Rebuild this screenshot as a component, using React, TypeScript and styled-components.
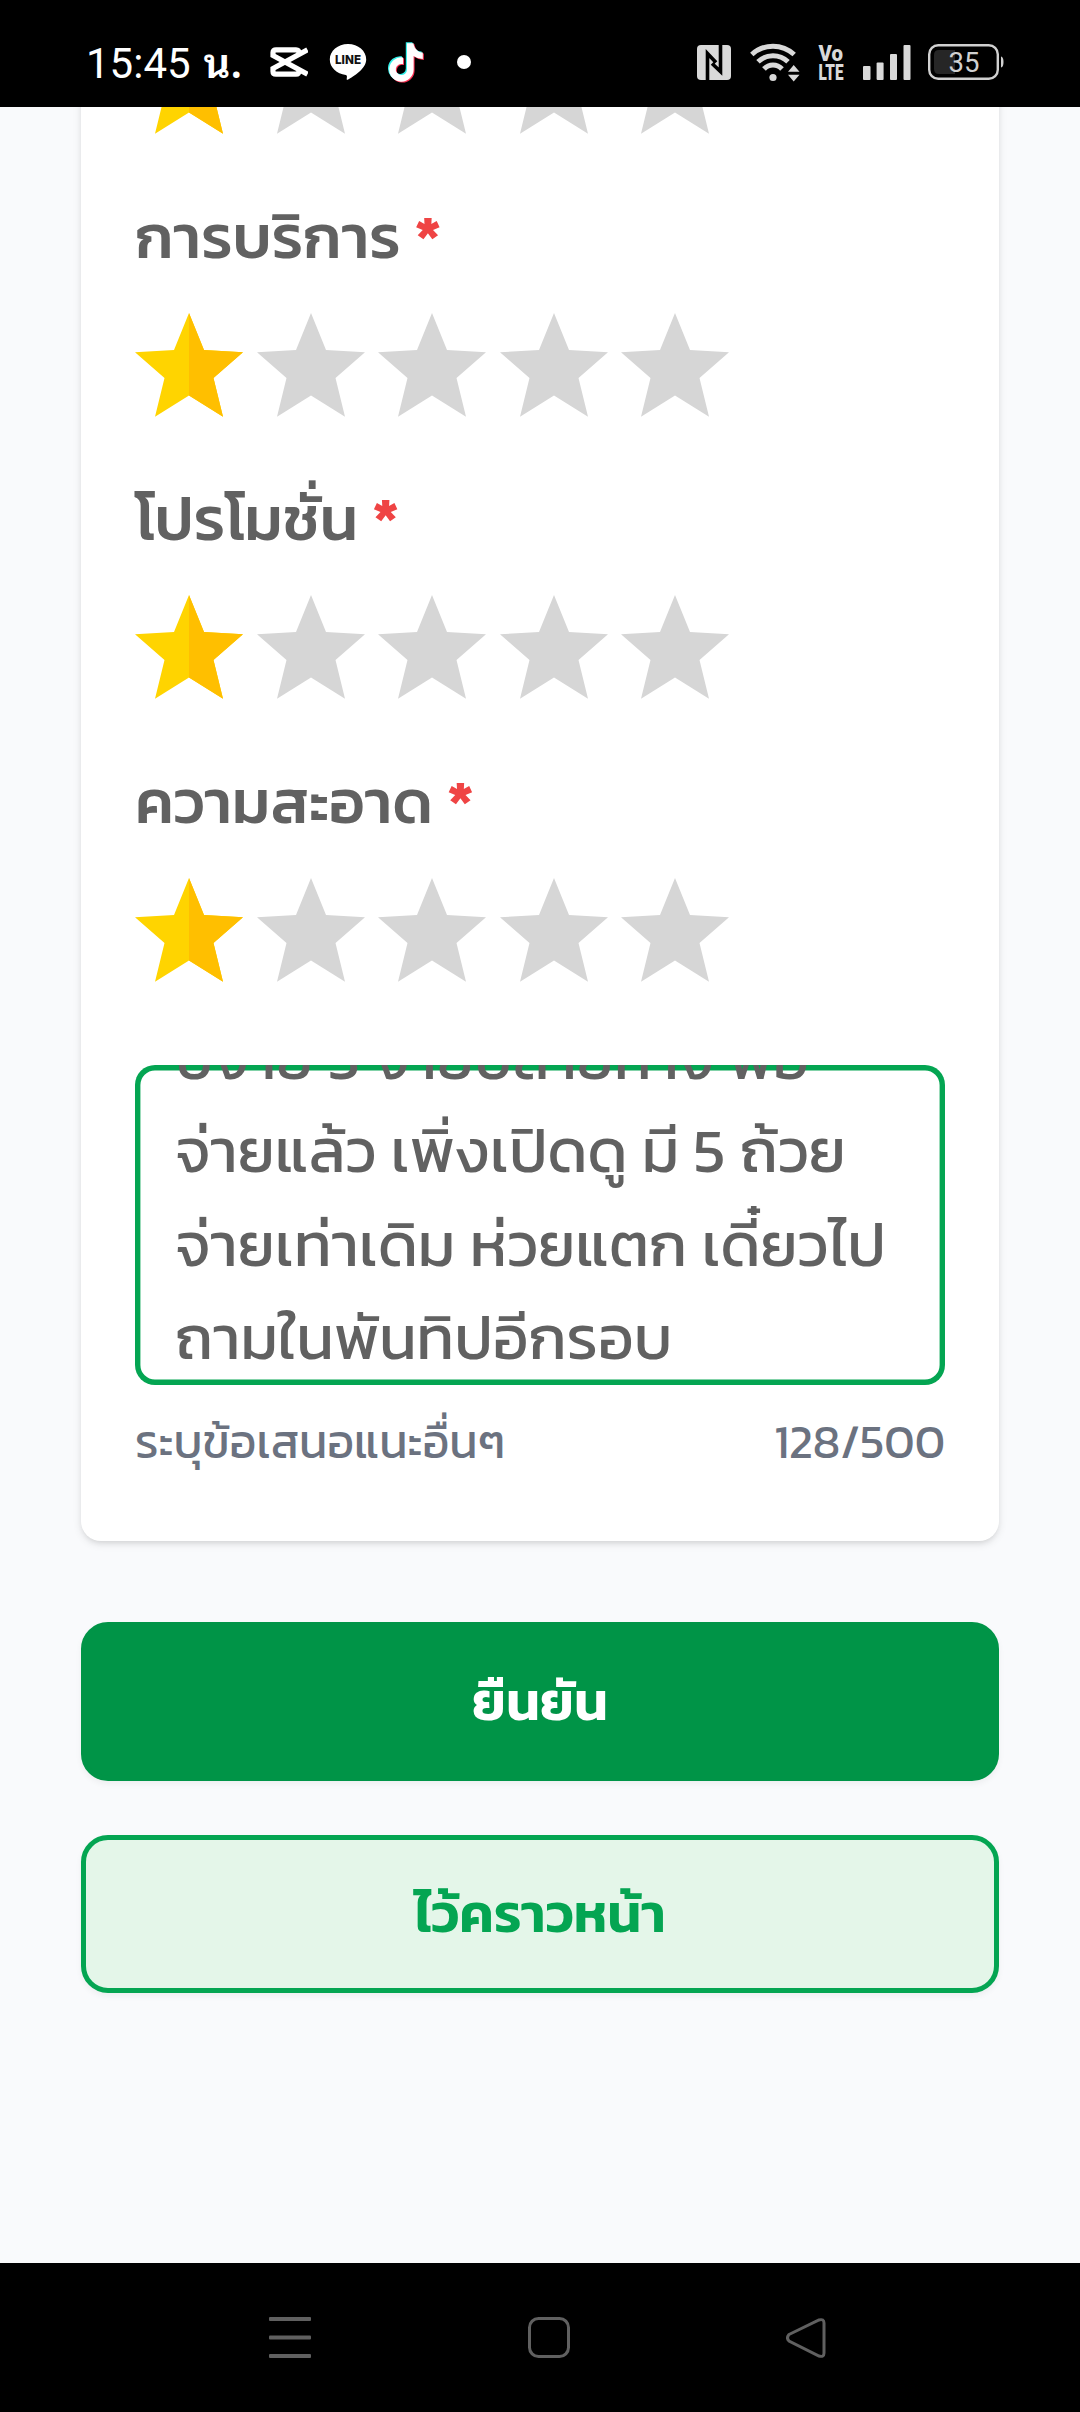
import React from "react";
import styled, { createGlobalStyle } from "styled-components";

const thai = `"Kanit", "Prompt", "Noto Sans Thai", "Noto Sans", "Liberation Sans", sans-serif`;
const loopedThai = `"Noto Sans Thai Looped", "Sarabun", "Noto Sans Thai", "Loma", "Garuda", "Noto Serif Thai", ${thai}`;

const GlobalStyle = createGlobalStyle`
  * { box-sizing: border-box; }
  html, body { margin: 0; padding: 0; background: #f9fafc; }
  body { font-family: ${thai}; }
  svg { display: block; flex: none; }
`;

const Screen = styled.div`
  width: 1080px;
  height: 2412px;
  display: flex;
  flex-direction: column;
  overflow: hidden;
  background: #f9fafc;
`;

const StatusBar = styled.header`
  flex: none;
  height: 107px;
  padding: 17px 76px 0 86px;
  display: flex;
  align-items: center;
  justify-content: space-between;
  background: #000;
`;

const StatusGroup = styled.div`
  display: flex;
  align-items: center;
`;

const Clock = styled.div`
  display: flex;
  align-items: baseline;
  gap: 13px;
  width: 184px;
  height: 40px;
  line-height: 40px;
  margin-top: -6px;
  font-family: Roboto, ${loopedThai};
  font-size: 42px;
  color: #fff;
  white-space: nowrap;
`;

const ClockUnit = styled.span`
  font-family: ${loopedThai};
  font-weight: 600;
  font-size: 42px;
`;

const Gap = styled.span<{ $w: number }>`
  flex: none;
  width: ${(p) => p.$w}px;
`;

const Main = styled.main`
  flex: none;
  height: 2156px;
  padding: 0 81px;
  overflow: hidden;
`;

const Card = styled.section`
  margin-top: -255px;
  height: 1689px;
  padding: 0 54px;
  background: #fff;
  border-radius: 20px;
  box-shadow: 0 3px 9px rgba(0, 0, 0, 0.1), 0 3px 6px -3px rgba(0, 0, 0, 0.12);
`;

const Rating = styled.div`
  height: 282.4px;
  display: flex;
  flex-direction: column;
  justify-content: flex-end;
`;

const Label = styled.h3`
  margin: 0 0 36px;
  height: 80px;
  font-size: 62.1px;
  line-height: 80px;
  font-weight: 500;
  color: #616161;
  white-space: nowrap;
`;

const Required = styled.span`
  color: #ef4444;
  font-weight: 600;
`;

const Stars = styled.div`
  display: flex;
  gap: 13.5px;
`;

const CommentBox = styled.div`
  margin-top: 83px;
  height: 320px;
  padding: 0 40px;
  display: flex;
  flex-direction: column;
  justify-content: flex-end;
  overflow: hidden;
  border-radius: 20px;
  box-shadow: inset 0 0 0 5.4px #04a552;
  color: #616161;
`;

const CommentLine = styled.div`
  flex: none;
  height: 93.5px;
  line-height: 94px;
  font-size: 62.15px;
  white-space: nowrap;
`;

const HelperRow = styled.div`
  margin-top: 25px;
  display: flex;
  justify-content: space-between;
  line-height: 64px;
  font-size: 46.6px;
  color: #6b7280;
  white-space: nowrap;
`;

const Button = styled.button<{ $primary?: boolean }>`
  display: flex;
  align-items: center;
  justify-content: center;
  width: 100%;
  height: ${(p) => (p.$primary ? 159 : 158)}px;
  margin: ${(p) => (p.$primary ? 81 : 54)}px 0 0;
  padding: 0 0 ${(p) => (p.$primary ? 1 : 2)}px;
  border: 5px solid ${(p) => (p.$primary ? "#009447" : "#04a552")};
  border-radius: 27px;
  background: ${(p) => (p.$primary ? "#009447" : "#e4f6e9")};
  color: ${(p) => (p.$primary ? "#fff" : "#04a552")};
  box-shadow: 0 3px 6px rgba(0, 0, 0, 0.05);
  font-family: ${thai};
  font-size: 54.5px;
  font-weight: 600;
`;

const NavBar = styled.nav`
  flex: none;
  height: 149px;
  padding: 0 254px 0 269px;
  display: flex;
  align-items: center;
  justify-content: space-between;
  background: #000;
`;

const STAR = "54,0 69,37 108,39.3 78.5,65 88,103.7 54,82.5 20,103.7 29.5,65 0,39.3 39,37";

function Star({ on }: { on: boolean }) {
  return (
    <svg width="108" height="104" viewBox="0 0 108 104">
      <polygon points={STAR} fill={on ? "#ffd400" : "#d6d6d6"} />
      {on && <polygon points="54,0 69,37 108,39.3 78.5,65 88,103.7 54,82.5" fill="#ffbf00" />}
    </svg>
  );
}

function RatingField({ label }: { label?: string }) {
  return (
    <Rating>
      {label && (
        <Label>
          {label} <Required>*</Required>
        </Label>
      )}
      <Stars>
        {[1, 2, 3, 4, 5].map((n) => (
          <Star key={n} on={n === 1} />
        ))}
      </Stars>
    </Rating>
  );
}

const CapCut = () => (
  <svg width="38" height="32" viewBox="0 0 38 32" fill="none" stroke="#fff" strokeWidth="5.2">
    <path d="M37.500 3.800 L3 22.500 V25.500 Q3 28.200 6 28.200 H26 Q29 28.200 29.200 24.500" />
    <path d="M37.500 28.200 L3 9.500 V6.500 Q3 3.800 6 3.800 H26 Q29 3.800 29.200 7.500" />
  </svg>
);

const Line = () => (
  <svg width="38" height="36" viewBox="0 0 38 36">
    <path d="M19 0C8.700 0 .8 6.900.8 15.500c0 8 6.900 14.300 16 15.400 1.700.3 1.100 2.200.9 4-.1.900.5 1.100 1.400.6C24 32.800 37.200 25 37.200 15.500 37.200 6.900 29.300 0 19 0z" fill="#fff" />
    <text x="19" y="20" textAnchor="middle" fontFamily="Inter, sans-serif" fontWeight="800" fontSize="12" fill="#111" textLength="26" lengthAdjust="spacingAndGlyphs">LINE</text>
  </svg>
);

const NOTE =
  "M448 209.900a210.100 210.100 0 0 1-122.800-39.300v178.800A162.600 162.600 0 1 1 185 188.300v89.900a74.600 74.600 0 1 0 52.200 71.200V0h88a121.200 121.200 0 0 0 1.900 22.200 122.200 122.200 0 0 0 53.900 80.200 121.400 121.400 0 0 0 67 20.100z";

const TikTok = () => (
  <svg width="36" height="41" viewBox="0 0 36 41">
    <path d={NOTE} fill="#ff3355" transform="translate(2.200 2.200) scale(.075)" />
    <path d={NOTE} fill="#35f0ea" transform="translate(0 .2) scale(.075)" />
    <path d={NOTE} fill="#fff" transform="translate(1.200 1.300) scale(.075)" />
  </svg>
);

const Nfc = () => (
  <svg width="34" height="35" viewBox="0 0 34 35">
    <rect width="34" height="35" rx="4" fill="#d9d9d9" />
    <path d="M10.500 35V8.500L19 17.500M23.500 0V26.500L15 18.500" fill="none" stroke="#000" strokeWidth="3.600" />
  </svg>
);

const Wifi = () => (
  <svg width="50" height="39" viewBox="0 0 50 39">
    <g fill="none" stroke="#d9d9d9" strokeWidth="5">
      <path d="M1.800 11.500C14 .4 32 .4 44.200 11.500" />
      <path d="M8 18.800C16.500 10.700 29.500 10.700 38 18.800" />
      <path d="M14 26C19 20.700 27 20.700 32 26" />
    </g>
    <circle cx="23" cy="34.500" r="3.600" fill="#d9d9d9" />
    <path d="M43.700 22L49.500 28.800H38ZM43.700 38.500L38 31.800H49.500Z" fill="#d9d9d9" />
  </svg>
);

const VoLte = () => (
  <svg width="26" height="35" viewBox="0 0 26 35" fill="#d9d9d9" fontFamily="Roboto, sans-serif" fontWeight="900">
    <text x=".5" y="16" fontSize="22" textLength="24.500" lengthAdjust="spacingAndGlyphs">Vo</text>
    <text x=".5" y="34.500" fontSize="22" textLength="25" lengthAdjust="spacingAndGlyphs">LTE</text>
  </svg>
);

const Signal = () => (
  <svg width="48" height="35" viewBox="0 0 48 35" fill="#d9d9d9">
    <rect x="0" y="21" width="7.500" height="14" rx="1" />
    <rect x="13.600" y="17.500" width="7" height="17.500" rx="1" />
    <rect x="27" y="9" width="7" height="26" rx="1" />
    <rect x="40.500" y="0" width="7" height="35" rx="1" />
  </svg>
);

const Battery = () => (
  <svg width="76" height="36" viewBox="0 0 76 36">
    <rect x="1.200" y="1.200" width="68.600" height="33.600" rx="9" fill="none" stroke="#d0d0d0" strokeWidth="2.400" />
    <path d="M27 6V30H11Q6 30 6 25V11Q6 6 11 6Z" fill="#262626" />
    <path d="M73 12.500Q75.500 13 75.500 18T73 23.500Z" fill="#d0d0d0" />
    <text x="36" y="27.500" textAnchor="middle" fontFamily="Roboto, sans-serif" fontSize="27.500" fill="#d0d0d0">35</text>
  </svg>
);

export default function App() {
  return (
    <Screen>
      <GlobalStyle />
      <StatusBar>
        <StatusGroup>
          <Clock>
            <span>15:45</span>
            <ClockUnit>น.</ClockUnit>
          </Clock>
          <CapCut />
          <Gap $w={21} />
          <Line />
          <Gap $w={21} />
          <TikTok />
          <Gap $w={33} />
          <svg width="14" height="14" viewBox="0 0 14 14">
            <circle cx="7" cy="7" r="7" fill="#fff" />
          </svg>
        </StatusGroup>
        <StatusGroup>
          <Nfc />
          <Gap $w={19} />
          <Wifi />
          <Gap $w={18} />
          <VoLte />
          <Gap $w={19} />
          <Signal />
          <Gap $w={17} />
          <Battery />
        </StatusGroup>
      </StatusBar>
      <Main>
        <Card>
          <RatingField />
          <RatingField label="การบริการ" />
          <RatingField label="โปรโมชั่น" />
          <RatingField label="ความสะอาด" />
          <CommentBox>
            <CommentLine>บจ่าย 3 จ่ายปลายทาง พอ</CommentLine>
            <CommentLine>จ่ายแล้ว เพิ่งเปิดดู มี 5 ถ้วย</CommentLine>
            <CommentLine>จ่ายเท่าเดิม ห่วยแตก เดี๋ยวไป</CommentLine>
            <CommentLine>ถามในพันทิปอีกรอบ</CommentLine>
          </CommentBox>
          <HelperRow>
            <span>ระบุข้อเสนอแนะอื่นๆ</span>
            <span>128/500</span>
          </HelperRow>
        </Card>
        <Button $primary>ยืนยัน</Button>
        <Button>ไว้คราวหน้า</Button>
      </Main>
      <NavBar>
        <svg width="42" height="41" viewBox="0 0 42 41" fill="#606060">
          <rect width="42" height="4" y="0" rx="1" />
          <rect width="42" height="4" y="18.500" rx="1" />
          <rect width="42" height="4" y="37" rx="1" />
        </svg>
        <svg width="42" height="41" viewBox="0 0 42 41" fill="none" stroke="#606060" strokeWidth="3">
          <rect x="1.500" y="1.500" width="39" height="38" rx="9" />
        </svg>
        <svg width="40" height="40" viewBox="0 0 40 40" fill="none" stroke="#606060" strokeWidth="3">
          <path d="M3 16.500L33 2Q38 .5 38 5V35Q38 39.500 33 38L3 23Q0 20 3 16.500Z" />
        </svg>
      </NavBar>
    </Screen>
  );
}
